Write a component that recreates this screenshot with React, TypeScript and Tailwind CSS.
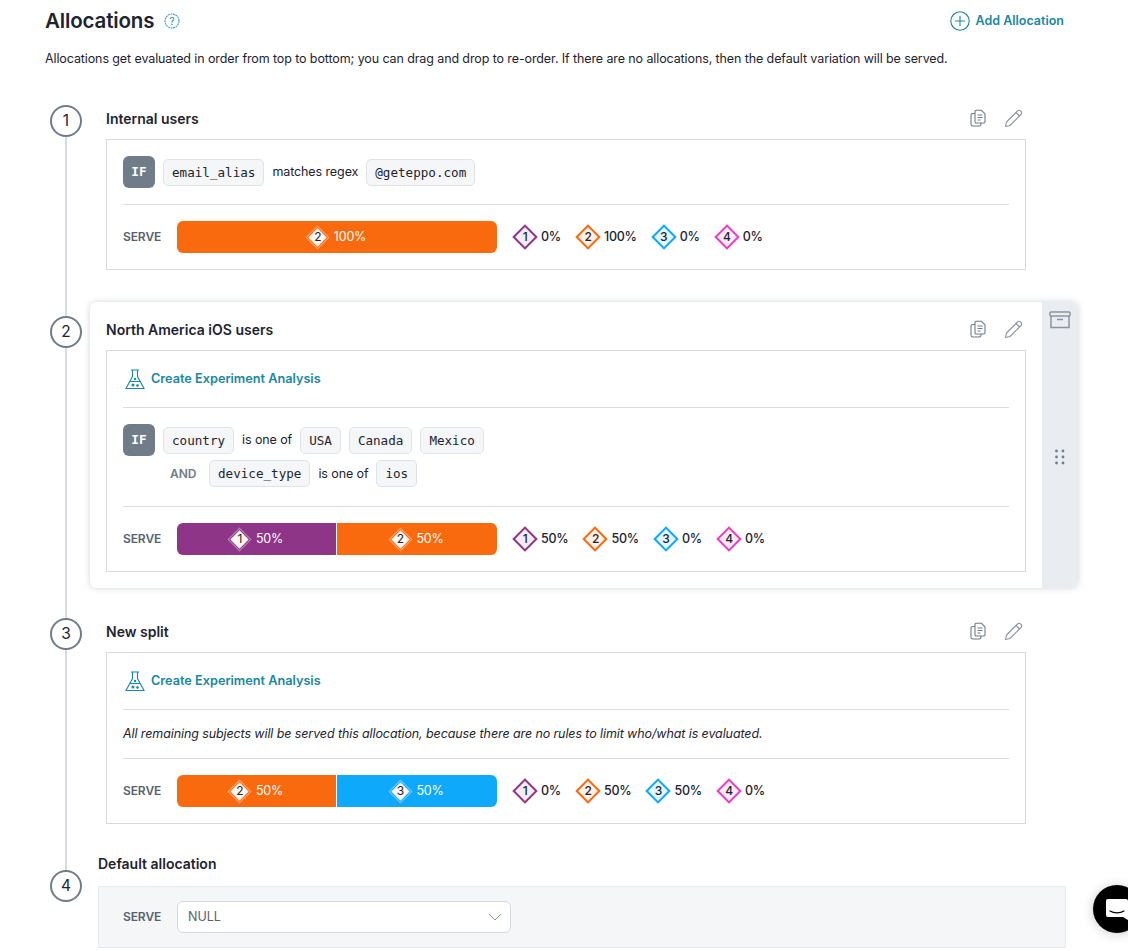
import { ReactNode } from 'react';

const variations: Record<number, { solid: string; border: string; tint: string }> = {
  1: { solid: 'bg-[#8f3587]', border: 'border-[#8f3587]', tint: 'bg-[#f3ecf3]' },
  2: { solid: 'bg-[#f9690e]', border: 'border-[#f9690e]', tint: 'bg-[#fef0e6]' },
  3: { solid: 'bg-[#0fa9fc]', border: 'border-[#0fa9fc]', tint: 'bg-[#e3f5ff]' },
  4: { solid: 'bg-[#e640bd]', border: 'border-[#e640bd]', tint: 'bg-[#fceaf7]' },
};

function Diamond({ n }: { n: number }) {
  const v = variations[n];
  return (
    <span className="relative flex h-6 w-6 shrink-0 items-center justify-center">
      <span className={`absolute h-[18px] w-[18px] rotate-45 border-2 ${v.border} ${v.tint}`} />
      <span className="relative text-[12px] leading-none text-[#1d2430]">{n}</span>
    </span>
  );
}

function BarDiamond({ n }: { n: number }) {
  return (
    <span className="relative flex h-5 w-5 shrink-0 items-center justify-center">
      <span className="absolute h-[13px] w-[13px] rotate-45 bg-[#fdf6f1] outline outline-1 outline-offset-1 outline-white/40" />
      <span className="relative text-[12px] leading-none text-[#1d2430]">{n}</span>
    </span>
  );
}

function Chip({ children }: { children: ReactNode }) {
  return (
    <span className="flex h-[27px] items-center rounded-[5px] border border-[#dfe3e8] bg-[#f4f6f8] px-2 pt-[2px] font-['DejaVu_Sans_Mono',monospace] text-[12.6px] tracking-normal text-[#1d2430]">
      {children}
    </span>
  );
}

function Serve({ parts, legend }: { parts: { n: number; pct: number }[]; legend: number[] }) {
  return (
    <div className="flex items-center">
      <span className="w-[54px] text-[12px] font-semibold tracking-[-0.1px] text-[#56626e]">SERVE</span>
      <div className="flex h-8 w-[320px] gap-px overflow-hidden rounded-md">
        {parts.map((p) => (
          <div
            key={p.n}
            className={`flex flex-1 items-center justify-center gap-[6px] text-[12.5px] tracking-[-0.2px] text-white not-last:max-w-[159px] ${variations[p.n].solid}`}
          >
            <BarDiamond n={p.n} />
            {p.pct}%
          </div>
        ))}
      </div>
      <div className="ml-4 flex items-center gap-[15px]">
        {legend.map((pct, i) => (
          <div key={i} className="flex items-center gap-1 text-[12.5px] font-medium tracking-[-0.25px] text-[#1d2430]">
            <Diamond n={i + 1} />
            {pct}%
          </div>
        ))}
      </div>
    </div>
  );
}

function CreateAnalysis() {
  return (
    <div className="flex h-[57px] items-center gap-[4px] border-b border-[#d8dde3] text-[12.7px] font-semibold text-[#1a87a3]">
      <svg width="24" height="24" viewBox="0 0 24 24" fill="none" stroke="#1a87a3" strokeWidth="1.1">
        <path d="M8 3h8M9.5 3v6.5L3 21.5h18l-6.5-12V3" />
        <path d="M7 14.5h10" />
        <circle cx="10" cy="18" r="1" fill="#1a87a3" />
        <circle cx="14.5" cy="18.5" r="0.8" fill="#1a87a3" />
        <circle cx="12" cy="12" r="0.6" fill="#1a87a3" />
      </svg>
      Create Experiment Analysis
    </div>
  );
}

function IfBadge() {
  return (
    <span className="flex h-8 w-8 shrink-0 items-center justify-center rounded-md bg-[#707c88] pb-px font-['DejaVu_Sans_Mono',monospace] text-[12.7px] font-bold tracking-normal text-white">
      IF
    </span>
  );
}

function CardActions() {
  return (
    <div className="flex items-center gap-[16px]">
      <svg width="20" height="20" viewBox="0 0 20 20" fill="none" stroke="#6f7b87" strokeWidth="1.1" strokeLinejoin="round">
        <path d="M7 13V3.5a1.2 1.2 0 0 1 1.2-1.2h5.3l3.5 3.5v8a1.2 1.2 0 0 1-1.2 1.2H8.2A1.2 1.2 0 0 1 7 13.8z" />
        <path d="M7 5.5H4.7a1.7 1.7 0 0 0-1.7 1.7v9.1a1.7 1.7 0 0 0 1.7 1.7h6.6a1.7 1.7 0 0 0 1.7-1.7V15" />
        <path d="M9.5 7h5M9.5 9.5h5M9.5 12h3" />
      </svg>
      <svg width="20" height="20" viewBox="0 0 20 20" fill="none" stroke="#8a949e" strokeWidth="1.1" strokeLinejoin="round">
        <path d="M1.5 18.5l1-4.5L13.5 3a2 2 0 0 1 3 0l.5.5a2 2 0 0 1 0 3L6 17.5l-4.5 1z" />
        <path d="M12 4.5l3.5 3.5" />
      </svg>
    </div>
  );
}

function Step({ n, className }: { n: number; className: string }) {
  return (
    <span className={`relative z-10 flex h-8 w-8 shrink-0 items-center justify-center rounded-full border-2 border-[#707c88] bg-white text-[15.5px] text-[#1d2430] ${className}`}>
      {n}
    </span>
  );
}

function Allocation({ n, title, raised, children }: { n: number; title: string; raised?: boolean; children: ReactNode }) {
  return (
    <div className="flex pl-[50px]">
      <Step n={n} className="mt-[14px]" />
      <div className={`ml-2 flex w-[988px] rounded-md ${raised ? 'bg-white shadow-[0_0_6px_rgba(30,45,60,0.2)]' : ''}`}>
        <div className="w-[952px] px-4 pt-[17px] pb-4">
          <div className="mb-[11px] flex h-5 items-center justify-between pr-[2px]">
            <h3 className="text-[14px] font-semibold text-[#1d2430]">{title}</h3>
            <CardActions />
          </div>
          <div className="border border-[#d5dadf] bg-white px-4">{children}</div>
        </div>
        {raised && (
          <div className="flex flex-1 flex-col items-center rounded-r-md bg-[#e9edf2] pt-[8px]">
            <svg width="22" height="20" viewBox="0 0 22 20" fill="none" stroke="#8a949e" strokeWidth="1.5">
              <rect x="1" y="2" width="20" height="4" rx="1" />
              <path d="M2 6v11.5h18V6M8 9.5h6" />
            </svg>
            <svg className="mt-[119px]" width="12" height="16" viewBox="0 0 12 16" fill="#707c88">
              <circle cx="2.5" cy="2" r="1.4" />
              <circle cx="9" cy="2" r="1.4" />
              <circle cx="2.5" cy="8" r="1.4" />
              <circle cx="9" cy="8" r="1.4" />
              <circle cx="2.5" cy="14" r="1.4" />
              <circle cx="9" cy="14" r="1.4" />
            </svg>
          </div>
        )}
      </div>
    </div>
  );
}

export default function App() {
  return (
    <div className="relative h-[951px] w-[1128px] overflow-hidden bg-white font-['Inter',sans-serif] text-[#1d2430]">
      <div className="pt-[8px] pl-[45px] pr-[64px]">
        <div className="flex h-[26px] items-center justify-between">
          <div className="flex items-center gap-[10px]">
            <h2 className="text-[20.5px] font-semibold tracking-[-0.15px]">Allocations</h2>
            <svg width="16" height="16" viewBox="0 0 16 16" fill="none">
              <circle cx="8" cy="8" r="7" stroke="#3aa0bd" strokeWidth="1.1" strokeDasharray="2 0.6" />
              <text x="8" y="11.5" textAnchor="middle" fontSize="10" fill="#1a87a3">?</text>
            </svg>
          </div>
          <div className="flex items-center gap-[6px] text-[12.5px] font-semibold text-[#1a87a3]">
            <svg width="20" height="20" viewBox="0 0 20 20" fill="none" stroke="#1a87a3" strokeWidth="1.1">
              <circle cx="10" cy="10" r="9.2" />
              <path d="M10 5v10M5 10h10" />
            </svg>
            Add Allocation
          </div>
        </div>
        <p className="mt-[15px] text-[12.5px] leading-[20px] tracking-[-0.105px]">
          Allocations get evaluated in order from top to bottom; you can drag and drop to re-order. If there are no allocations, then the default variation will be served.
        </p>
      </div>

      <div className="relative mt-[22px]">
        <div className="absolute left-[65px] top-[20px] h-[770px] w-[2px] bg-[#d5dbe1]" />
        <div className="flex flex-col gap-4">
          <Allocation n={1} title="Internal users">
            <div className="flex items-center gap-2 border-b border-[#d8dde3] pt-4 pb-4 text-[12.5px] tracking-[-0.1px]">
              <IfBadge />
              <Chip>email_alias</Chip>
              <span className="pt-px">matches regex</span>
              <Chip>@geteppo.com</Chip>
            </div>
            <div className="pt-4 pb-4">
              <Serve parts={[{ n: 2, pct: 100 }]} legend={[0, 100, 0, 0]} />
            </div>
          </Allocation>

          <Allocation n={2} title="North America iOS users" raised>
            <CreateAnalysis />
            <div className="flex flex-col gap-1 border-b border-[#d8dde3] pt-4 pb-[19px] text-[12.5px] tracking-[-0.1px]">
              <div className="flex items-center gap-2">
                <IfBadge />
                <Chip>country</Chip>
                <span className="pt-px">is one of</span>
                <Chip>USA</Chip>
                <Chip>Canada</Chip>
                <Chip>Mexico</Chip>
              </div>
              <div className="flex items-center gap-2 pl-[47px]">
                <span className="w-[31px] text-[12px] font-semibold tracking-[-0.1px] text-[#707c88]">AND</span>
                <Chip>device_type</Chip>
                <span className="pt-px">is one of</span>
                <Chip>ios</Chip>
              </div>
            </div>
            <div className="pt-4 pb-4">
              <Serve parts={[{ n: 1, pct: 50 }, { n: 2, pct: 50 }]} legend={[50, 50, 0, 0]} />
            </div>
          </Allocation>

          <Allocation n={3} title="New split">
            <CreateAnalysis />
            <div className="flex h-[49px] items-center border-b border-[#d8dde3] text-[12.5px] tracking-[-0.1px] italic">
              All remaining subjects will be served this allocation, because there are no rules to limit who/what is evaluated.
            </div>
            <div className="pt-4 pb-4">
              <Serve parts={[{ n: 2, pct: 50 }, { n: 3, pct: 50 }]} legend={[0, 50, 50, 0]} />
            </div>
          </Allocation>
        </div>

        <div className="mt-[13px] flex pl-[50px]">
          <Step n={4} className="mt-[17px]" />
          <div className="w-[984px] pl-4">
            <h3 className="mb-[13px] flex h-5 items-center text-[14px] font-semibold">Default allocation</h3>
            <div className="flex h-[62px] w-[968px] items-center border border-[#e6eaee] bg-[#f4f6f8] pl-6">
              <span className="w-[54px] text-[12px] font-semibold tracking-[-0.1px] text-[#56626e]">SERVE</span>
              <div className="flex h-8 w-[334px] items-center justify-between rounded-md border border-[#d5dadf] bg-white pl-[10px] pr-2 text-[12.5px] text-[#56626e]">
                NULL
                <svg width="14" height="8" viewBox="0 0 14 8" fill="none" stroke="#8a949e" strokeWidth="1">
                  <path d="M1 1l6 6 6-6" />
                </svg>
              </div>
            </div>
          </div>
        </div>
      </div>

      <div className="absolute left-[1093px] top-[885px] flex h-12 w-12 items-center justify-center rounded-full bg-black shadow-[0_1px_12px_rgba(0,0,0,0.2)]">
        <svg width="24" height="24" viewBox="0 0 24 24">
          <path d="M3 2h18a2 2 0 0 1 2 2v19l-5-3H3a2 2 0 0 1-2-2V4a2 2 0 0 1 2-2z" fill="#fff" />
          <path d="M5 14c4 2.5 10 2.5 14 0" fill="none" stroke="#000" strokeWidth="1.2" strokeLinecap="round" />
        </svg>
      </div>
    </div>
  );
}
